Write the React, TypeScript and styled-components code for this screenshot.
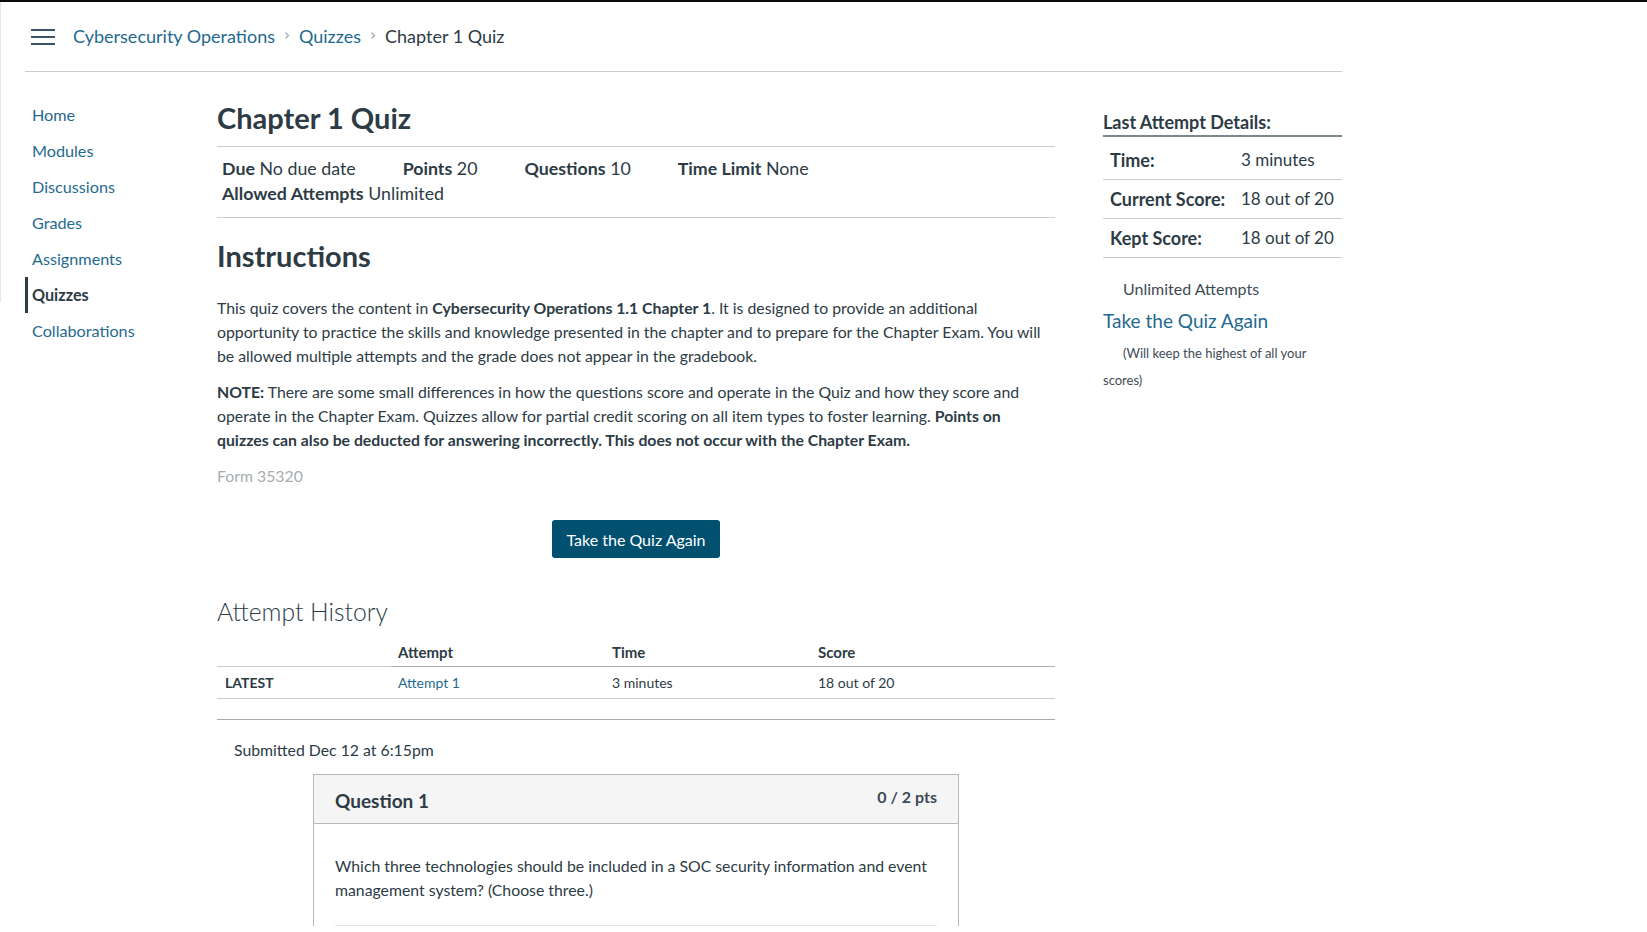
import React from "react";
import styled, { createGlobalStyle } from "styled-components";

const GlobalStyle = createGlobalStyle`
  html, body {
    margin: 0;
    padding: 0;
    background: #fff;
  }
  body {
    font-family: Lato, "Noto Sans", sans-serif;
    color: #2d3b45;
  }
  * {
    box-sizing: border-box;
  }
`;

const linkColor = "#1f6a8e";

const Frame = styled.div`
  display: flex;
  align-items: flex-start;
  border-top: 2px solid #0b0b0b;
  min-height: 930px;
`;

const EdgeStrip = styled.div`
  flex: none;
  width: 1px;
  height: 300px;
  background: #e2e4ee;
`;

const Shell = styled.div`
  margin-left: 24px;
  width: 1317px;
`;

const Header = styled.header`
  height: 70px;
  display: flex;
  align-items: center;
  gap: 18px;
  padding-left: 6px;
  padding-bottom: 2px;
  border-bottom: 1px solid #c7cdd1;
`;

const Burger = styled.svg`
  width: 24px;
  height: 16px;
  margin-top: 2px;
`;

const Crumbs = styled.nav`
  display: flex;
  align-items: center;
  gap: 9px;
  font-size: 18px;
`;

const Crumb = styled.a<{ $current?: boolean }>`
  color: ${(p) => (p.$current ? "#2d3b45" : linkColor)};
  text-decoration: none;
`;

const Sep = styled.svg`
  width: 6px;
  height: 9px;
`;

const Body = styled.div`
  display: grid;
  grid-template-columns: 192px 838px 287px;
  align-items: start;
`;

const SideNav = styled.ul`
  list-style: none;
  margin: 0;
  padding: 25px 0 0;
`;

const NavItem = styled.li<{ $active?: boolean }>`
  height: 36px;
  line-height: 36px;
  font-size: 16.2px;
  padding-left: 4px;
  border-left: 3px solid ${(p) => (p.$active ? "#2d3b45" : "transparent")};
  color: ${(p) => (p.$active ? "#2d3b45" : linkColor)};
  font-weight: ${(p) => (p.$active ? 700 : 400)};
`;

const Content = styled.main`
  padding-top: 28px;
`;

const Title = styled.h1`
  margin: 0;
  font-size: 29px;
  line-height: 36px;
  font-weight: 700;
  padding-bottom: 10px;
  border-bottom: 1px solid #c7cdd1;
`;

const Meta = styled.div`
  display: flex;
  flex-wrap: wrap;
  column-gap: 47px;
  padding: 9px 5px 11px;
  border-bottom: 1px solid #c7cdd1;
  font-size: 17.8px;
  line-height: 25px;
`;

const MetaItem = styled.div`
  b {
    font-weight: 700;
  }
`;

const Heading = styled.h2`
  margin: 21px 0 0;
  font-size: 29px;
  line-height: 34px;
  font-weight: 700;
`;

const Para = styled.p<{ $muted?: boolean }>`
  margin: 12px 0 0;
  font-size: 15.8px;
  line-height: 24px;
  color: ${(p) => (p.$muted ? "#a7adb1" : "#2d3b45")};
  b {
    font-weight: 700;
  }
`;

const FirstPara = styled(Para)`
  margin-top: 23px;
`;

const ButtonRow = styled.div`
  display: flex;
  justify-content: center;
  margin-top: 32px;
`;

const PrimaryButton = styled.button`
  height: 38px;
  width: 168px;
  border: none;
  border-radius: 3px;
  background: #01506f;
  color: #fff;
  font-family: inherit;
  font-size: 16px;
`;

const HistoryTitle = styled.h2`
  margin: 39px 0 0;
  font-size: 24.7px;
  line-height: 30px;
  font-weight: 300;
`;

const HistoryTable = styled.div`
  display: grid;
  grid-template-columns: 174px 214px 206px 1fr;
  margin-top: 11px;
`;

const Th = styled.div<{ $light?: boolean }>`
  padding: 4px 7px;
  line-height: 20px;
  font-size: 15px;
  font-weight: 700;
  border-bottom: 1px solid ${(p) => (p.$light ? "#c7cdd1" : "#a9b2b8")};
`;

const Td = styled.div<{ $strong?: boolean; $link?: boolean }>`
  padding: 6px 7px 5px;
  line-height: 20px;
  font-size: 14px;
  font-weight: ${(p) => (p.$strong ? 700 : 400)};
  color: ${(p) => (p.$link ? linkColor : "#2d3b45")};
  border-bottom: 1px solid #c7cdd1;
  ${(p) => (p.$strong ? "padding-left: 8px;" : "")}
`;

const Rule = styled.hr`
  margin: 20px 0 0;
  border: none;
  border-top: 1px solid #a5acb1;
`;

const Submitted = styled.div`
  margin-top: 18px;
  padding-left: 17px;
  font-size: 15.8px;
  line-height: 24px;
`;

const QuestionCard = styled.section`
  width: 646px;
  margin: 12px auto 0;
  border: 1px solid #b4b9bd;
  border-bottom: none;
`;

const QuestionHead = styled.div`
  display: flex;
  justify-content: space-between;
  align-items: flex-start;
  height: 49px;
  padding: 0 21px 0 21px;
  background: #f5f5f5;
  border-bottom: 1px solid #b4b9bd;
`;

const QuestionName = styled.h3`
  margin: 14px 0 0;
  font-size: 19px;
  line-height: 24px;
  font-weight: 700;
`;

const Points = styled.div`
  margin-top: 11px;
  font-size: 16px;
  line-height: 22px;
  font-weight: 700;
  color: #3d4b55;
`;

const QuestionBody = styled.div`
  padding: 30px 21px 0;
`;

const QuestionText = styled.p`
  margin: 0;
  font-size: 15.8px;
  line-height: 24px;
  padding-bottom: 23px;
  border-bottom: 1px solid #e3e6e8;
`;

const Aside = styled.aside`
  padding: 40px 0 0 48px;
`;

const AsideTitle = styled.h3`
  margin: 0;
  font-size: 18px;
  line-height: 20px;
  font-weight: 700;
  padding-bottom: 3px;
  border-bottom: 2px solid #7d878e;
`;

const Details = styled.div`
  display: grid;
  grid-template-columns: 131px 1fr;
  margin-top: 4px;
`;

const DCell = styled.div<{ $label?: boolean }>`
  padding: 7px 7px;
  font-size: ${(p) => (p.$label ? "18px" : "17px")};
  line-height: 24px;
  font-weight: ${(p) => (p.$label ? 700 : 400)};
  border-bottom: 1px solid #c7cdd1;
  white-space: nowrap;
`;

const AttemptsNote = styled.div`
  margin-top: 21px;
  padding-left: 20px;
  font-size: 16px;
  line-height: 20px;
  color: #3d4b55;
`;

const AgainLink = styled.a`
  display: block;
  margin-top: 10px;
  font-size: 19px;
  line-height: 24px;
  color: ${linkColor};
  text-decoration: none;
`;

const KeepNote = styled.p`
  margin: 7px 0 0;
  font-size: 13px;
  line-height: 27px;
  text-indent: 20px;
  color: #3d4b55;
`;

const navItems = [
  "Home",
  "Modules",
  "Discussions",
  "Grades",
  "Assignments",
  "Quizzes",
  "Collaborations",
];

const details = [
  ["Time:", "3 minutes"],
  ["Current Score:", "18 out of 20"],
  ["Kept Score:", "18 out of 20"],
];

const Chevron = () => (
  <Sep viewBox="0 0 6 9">
    <path d="M1.5 1.5l3 3-3 3" fill="none" stroke="#9aa4ab" strokeWidth="1.1" />
  </Sep>
);

export default function App() {
  return (
    <>
      <GlobalStyle />
      <Frame>
        <EdgeStrip />
        <Shell>
          <Header>
            <Burger viewBox="0 0 24 16">
              <rect x="0" y="0" width="24" height="2" fill="#3f5365" />
              <rect x="0" y="7" width="24" height="2" fill="#3f5365" />
              <rect x="0" y="14" width="24" height="2" fill="#3f5365" />
            </Burger>
            <Crumbs>
              <Crumb href="#">Cybersecurity Operations</Crumb>
              <Chevron />
              <Crumb href="#">Quizzes</Crumb>
              <Chevron />
              <Crumb $current>Chapter 1 Quiz</Crumb>
            </Crumbs>
          </Header>

          <Body>
            <SideNav>
              {navItems.map((n) => (
                <NavItem key={n} $active={n === "Quizzes"}>
                  {n}
                </NavItem>
              ))}
            </SideNav>

            <Content>
              <Title>Chapter 1 Quiz</Title>
              <Meta>
                <MetaItem>
                  <b>Due</b> No due date
                </MetaItem>
                <MetaItem>
                  <b>Points</b> 20
                </MetaItem>
                <MetaItem>
                  <b>Questions</b> 10
                </MetaItem>
                <MetaItem>
                  <b>Time Limit</b> None
                </MetaItem>
                <MetaItem>
                  <b>Allowed Attempts</b> Unlimited
                </MetaItem>
              </Meta>

              <Heading>Instructions</Heading>
              <FirstPara>
                This quiz covers the content in{" "}
                <b>Cybersecurity Operations 1.1 Chapter 1</b>. It is designed to
                provide an additional opportunity to practice the skills and
                knowledge presented in the chapter and to prepare for the
                Chapter Exam. You will be allowed multiple attempts and the
                grade does not appear in the gradebook.
              </FirstPara>
              <Para>
                <b>NOTE:</b> There are some small differences in how the
                questions score and operate in the Quiz and how they score and
                operate in the Chapter Exam. Quizzes allow for partial credit
                scoring on all item types to foster learning.{" "}
                <b>
                  Points on quizzes can also be deducted for answering
                  incorrectly. This does not occur with the Chapter Exam.
                </b>
              </Para>
              <Para $muted>Form 35320</Para>

              <ButtonRow>
                <PrimaryButton>Take the Quiz Again</PrimaryButton>
              </ButtonRow>

              <HistoryTitle>Attempt History</HistoryTitle>
              <HistoryTable>
                <Th $light />
                <Th>Attempt</Th>
                <Th>Time</Th>
                <Th>Score</Th>
                <Td $strong>LATEST</Td>
                <Td $link>Attempt 1</Td>
                <Td>3 minutes</Td>
                <Td>18 out of 20</Td>
              </HistoryTable>
              <Rule />

              <Submitted>Submitted Dec 12 at 6:15pm</Submitted>
              <QuestionCard>
                <QuestionHead>
                  <QuestionName>Question 1</QuestionName>
                  <Points>0 / 2 pts</Points>
                </QuestionHead>
                <QuestionBody>
                  <QuestionText>
                    Which three technologies should be included in a SOC
                    security information and event management system? (Choose
                    three.)
                  </QuestionText>
                </QuestionBody>
              </QuestionCard>
            </Content>

            <Aside>
              <AsideTitle>Last Attempt Details:</AsideTitle>
              <Details>
                {details.map(([k, v]) => (
                  <React.Fragment key={k}>
                    <DCell $label>{k}</DCell>
                    <DCell>{v}</DCell>
                  </React.Fragment>
                ))}
              </Details>
              <AttemptsNote>Unlimited Attempts</AttemptsNote>
              <AgainLink href="#">Take the Quiz Again</AgainLink>
              <KeepNote>(Will keep the highest of all your scores)</KeepNote>
            </Aside>
          </Body>
        </Shell>
      </Frame>
    </>
  );
}
